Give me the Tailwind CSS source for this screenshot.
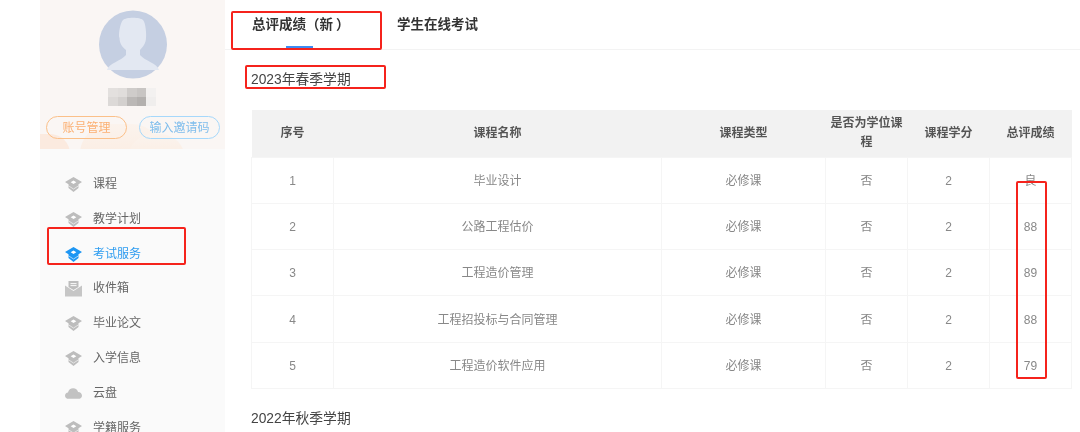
<!DOCTYPE html>
<html lang="zh">
<head>
<meta charset="utf-8">
<script src="https://cdn.jsdelivr.net/npm/@tailwindcss/browser@4"></script>
</head>
<body class="m-0 bg-white">
<div class="relative flex w-[1080px] h-[432px] overflow-hidden bg-white font-['Liberation_Sans','Noto_Sans_CJK_SC',sans-serif] text-[12px] text-[#666] blur-[0.35px]">
  <svg width="0" height="0" class="absolute">
    <defs>
      <symbol id="cap" viewBox="0 0 17 15">
        <path d="M8.5 0 L17 5 L13.5 7.2 L13.5 11 L8.5 15 L3.5 11 L3.5 7.2 L0 5 Z" fill="currentColor"/>
        <path d="M8.5 3.6 L11.3 5.3 L8.5 7 L5.7 5.3 Z" fill="#fff"/>
        <path d="M3.5 8.8 L8.5 12 L13.5 8.8" fill="none" stroke="#fff" stroke-width=".6"/>
      </symbol>
    </defs>
  </svg>

  <aside class="ml-[40px] w-[185px] shrink-0 bg-[#fafafa] flex flex-col">
    <div class="relative h-[149px] shrink-0 bg-[#faf6f4] overflow-hidden flex flex-col items-center pt-[10px]">
      <div class="absolute left-[-30px] top-[134px] w-[60px] h-[40px] rounded-full bg-[#fbeadf]"></div>
      <div class="absolute left-[40px] top-[124px] w-[82px] h-[60px] rounded-full bg-linear-to-b from-[#fbf3ed] to-[#fbe8da]"></div>
      <div class="absolute left-[88px] top-[134px] w-[57px] h-[50px] rounded-full bg-linear-to-b from-[#fbf3ed] to-[#fbe8da]"></div>
      <svg class="relative shrink-0" width="68" height="69" viewBox="0 0 68 69">
        <circle cx="34" cy="34.5" r="34" fill="#c5cfe2"/>
        <path d="M8 60 C10 53 22 51 27 45 L27 40 C23 37 20.5 33 20.5 28 C19 26 21 13 24 10 C27 7 41 7 44 10 C47 13 47.5 26 47 28 C47 33 44 37 41 40 L41 45 C46 51 58 53 60 60 Z" fill="#e3e8f2"/>
      </svg>
      <div class="relative mt-[9px] grid grid-cols-[repeat(6,9.5px)] grid-rows-[repeat(2,9px)] self-start ml-[68px]">
        <i class="bg-[#e3e0de]"></i><i class="bg-[#e0dddb]"></i><i class="bg-[#cfccca]"></i><i class="bg-[#c8c5c3]"></i><i class="bg-[#f3f1f0]"></i><i class="bg-[#faf6f4]"></i>
        <i class="bg-[#dcd9d7]"></i><i class="bg-[#d3d0ce]"></i><i class="bg-[#bbb8b6]"></i><i class="bg-[#b3b0ae]"></i><i class="bg-[#f0eeed]"></i><i class="bg-[#faf6f4]"></i>
      </div>
      <div class="relative mt-[10px] self-start ml-[6px] flex gap-[12px]">
        <div class="w-[81px] h-[23px] rounded-full border border-[#fbc089] text-[#fbb073] flex items-center justify-center">账号管理</div>
        <div class="w-[81px] h-[23px] rounded-full border border-[#a6d8fb] text-[#7fbdec] flex items-center justify-center">输入邀请码</div>
      </div>
    </div>
    <nav class="flex flex-col pl-[25px] mt-[26px] gap-[15.8px] leading-[19px]">
      <a class="flex items-center gap-[11px] text-[#666]"><svg class="text-[#bdbdbd]" width="17" height="15"><use href="#cap"/></svg>课程</a>
      <a class="flex items-center gap-[11px] text-[#666]"><svg class="text-[#bdbdbd]" width="17" height="15"><use href="#cap"/></svg>教学计划</a>
      <a class="flex items-center gap-[11px] text-[#2d9cf0]"><svg class="text-[#1d96f3]" width="17" height="15"><use href="#cap"/></svg>考试服务</a>
      <a class="flex items-center gap-[11px] text-[#666]">
        <svg width="17" height="16" viewBox="0 0 17 16"><path d="M3.5 0 H13.5 V6 L8.5 9 L3.5 6 Z" fill="#bdbdbd"/><path d="M0 4.5 L8.5 10 L17 4.5 V15.5 H0 Z" fill="#c6c6c6"/><path d="M5.5 2.6H11.5M5.5 4.6H11.5" stroke="#fafafa" stroke-width="1"/></svg>收件箱</a>
      <a class="flex items-center gap-[11px] text-[#666]"><svg class="text-[#bdbdbd]" width="17" height="15"><use href="#cap"/></svg>毕业论文</a>
      <a class="flex items-center gap-[11px] text-[#666]"><svg class="text-[#bdbdbd]" width="17" height="15"><use href="#cap"/></svg>入学信息</a>
      <a class="flex items-center gap-[11px] text-[#666]"><svg width="17" height="15" viewBox="0 0 16 14"><path d="M3.5 12 C1.5 12 0 10.7 0 9 C0 7.4 1.2 6.3 2.8 6.1 C3.3 3.4 5.3 2 7.7 2 C10 2 11.8 3.4 12.3 5.6 C14.4 5.7 16 7.1 16 9 C16 10.8 14.5 12 12.5 12 Z" fill="#c2c2c2"/></svg>云盘</a>
      <a class="flex items-center gap-[11px] text-[#666]"><svg class="text-[#bdbdbd]" width="17" height="15"><use href="#cap"/></svg>学籍服务</a>
    </nav>
  </aside>

  <main class="flex-1 min-w-0 flex flex-col">
    <div class="h-[50px] shrink-0 border-b border-[#f3f3f3] flex pl-[27px] gap-[52px] text-[13.5px] font-bold text-[#333]">
      <div class="relative w-[93px] pt-[16px] leading-[18px] whitespace-nowrap">总评成绩（新<span class="ml-[3px]">）</span>
        <div class="absolute left-[34px] bottom-0 w-[27px] h-[3px] bg-[#3d8bf2]"></div>
      </div>
      <div class="pt-[16px] leading-[18px]">学生在线考试</div>
    </div>
    <h2 class="ml-[26px] mt-[20px] h-[20px] text-[13.8px] leading-[20px] font-normal text-[#444]">2023年春季学期</h2>
    <table class="ml-[26px] mt-[20px] w-[820px] table-fixed border-collapse text-center text-[12px] text-[#888]">
      <colgroup><col class="w-[82px]"><col class="w-[328px]"><col class="w-[164px]"><col class="w-[82px]"><col class="w-[82px]"><col class="w-[82px]"></colgroup>
      <thead class="bg-[#f2f2f2] text-[#555] font-bold">
        <tr class="h-[47px]"><th class="px-[4px] leading-[19px]">序号</th><th class="px-[4px]">课程名称</th><th class="px-[4px]">课程类型</th><th class="px-[4px] leading-[19px]">是否为学位课程</th><th class="px-[4px]">课程学分</th><th class="px-[4px]">总评成绩</th></tr>
      </thead>
      <tbody class="[&_td]:border [&_td]:border-[#f5f5f5] [&_td]:pt-[1px]">
        <tr class="h-[46.3px]"><td>1</td><td>毕业设计</td><td>必修课</td><td>否</td><td>2</td><td>良</td></tr>
        <tr class="h-[46.3px]"><td>2</td><td>公路工程估价</td><td>必修课</td><td>否</td><td>2</td><td>88</td></tr>
        <tr class="h-[46.3px]"><td>3</td><td>工程造价管理</td><td>必修课</td><td>否</td><td>2</td><td>89</td></tr>
        <tr class="h-[46.3px]"><td>4</td><td>工程招投标与合同管理</td><td>必修课</td><td>否</td><td>2</td><td>88</td></tr>
        <tr class="h-[46.3px]"><td>5</td><td>工程造价软件应用</td><td>必修课</td><td>否</td><td>2</td><td>79</td></tr>
      </tbody>
    </table>
    <h2 class="ml-[26px] mt-[20px] text-[13.8px] leading-[20px] font-normal text-[#444]">2022年秋季学期</h2>
  </main>

  <div class="absolute left-[47px] top-[227px] w-[139px] h-[38px] border-[2.5px] border-[#f5231c] rounded-[2px]"></div>
  <div class="absolute left-[231px] top-[11px] w-[151px] h-[39px] border-[2.5px] border-[#f5231c] rounded-[2px]"></div>
  <div class="absolute left-[245px] top-[65px] w-[141px] h-[24px] border-[2.5px] border-[#f5231c] rounded-[2px]"></div>
  <div class="absolute left-[1016px] top-[181px] w-[31px] h-[198px] border-[2.5px] border-[#f5231c] rounded-[2px]"></div>
</div>
</body>
</html>
